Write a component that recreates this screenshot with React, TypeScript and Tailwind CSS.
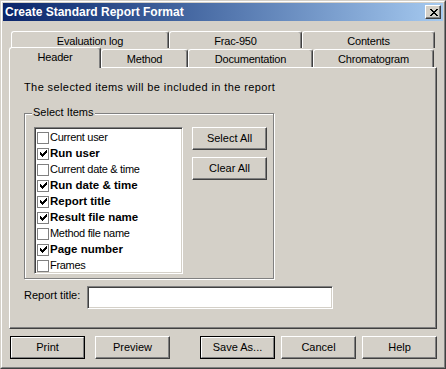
import React from "react";

const items: [string, boolean][] = [
  ["Current user", false],
  ["Run user", true],
  ["Current date & time", false],
  ["Run date & time", true],
  ["Report title", true],
  ["Result file name", true],
  ["Method file name", false],
  ["Page number", true],
  ["Frames", false],
];

const checkPx = [
  [6, 0], [5, 1], [6, 1], [0, 2], [4, 2], [5, 2], [6, 2], [0, 3], [1, 3], [3, 3], [4, 3], [5, 3],
  [0, 4], [1, 4], [2, 4], [3, 4], [4, 4], [1, 5], [2, 5], [3, 5], [2, 6],
];

const xPx = [
  [0, 0], [1, 0], [6, 0], [7, 0],
  [1, 1], [2, 1], [5, 1], [6, 1],
  [2, 2], [3, 2], [4, 2], [5, 2],
  [3, 3], [4, 3],
  [2, 4], [3, 4], [4, 4], [5, 4],
  [1, 5], [2, 5], [5, 5], [6, 5],
  [0, 6], [1, 6], [6, 6], [7, 6],
];

function PixelGlyph({ px, w, h }: { px: number[][]; w: number; h: number }) {
  return (
    <svg width={w} height={h} viewBox={`0 0 ${w} ${h}`} shapeRendering="crispEdges">
      {px.map(([x, y], i) => (
        <rect key={i} x={x} y={y} width="1" height="1" fill="#000" />
      ))}
    </svg>
  );
}

function Btn({ label, def }: { label: string; def?: boolean }) {
  if (def) {
    return (
      <div className="w-[75px] h-[23px] border border-black bg-[#d4d0c8]">
        <div className="w-full h-full border border-t-white border-l-white border-r-[#808080] border-b-[#808080] flex items-center justify-center text-[11px] text-black">
          {label}
        </div>
      </div>
    );
  }
  return (
    <div className="w-[75px] h-[23px] border border-t-white border-l-white border-r-[#404040] border-b-[#404040] shadow-[inset_-1px_-1px_0_#808080] bg-[#d4d0c8] flex items-center justify-center text-[11px] text-black">
      {label}
    </div>
  );
}

function BackTab({ label, w }: { label: string; w: number }) {
  return (
    <div
      style={{ width: w }}
      className="h-[17px] border-l border-t border-r border-l-white border-t-white border-r-[#404040] shadow-[inset_-1px_0_0_#808080] rounded-t-[3px] bg-[#d4d0c8] flex items-center justify-center pt-[2px] text-[11px] tracking-[-0.2px] text-black"
    >
      {label}
    </div>
  );
}

function FrontTab({ label, w }: { label: string; w: number }) {
  return (
    <div
      style={{ width: w }}
      className="mt-[1px] h-[18px] border-l border-t border-r border-l-white border-t-white border-r-[#404040] shadow-[inset_-1px_0_0_#808080] rounded-t-[3px] bg-[#d4d0c8] flex items-center justify-center pt-[1px] text-[11px] tracking-[-0.2px] text-black"
    >
      {label}
    </div>
  );
}

export default function App() {
  return (
    <div className="w-[446px] h-[369px] bg-[#d4d0c8] border border-t-[#d4d0c8] border-l-[#d4d0c8] border-r-[#404040] border-b-[#404040] font-['Liberation_Sans',Arial,sans-serif]">
      <div className="w-full h-full border border-t-white border-l-white border-r-[#808080] border-b-[#808080] p-[1px] flex flex-col">
        {/* Title bar */}
        <div className="h-[18px] bg-gradient-to-r from-[#0a246a] to-[#a6caf0] flex items-center justify-between pl-[2px] pr-[2px]">
          <span className="text-white font-bold text-[12px] leading-[14px]">Create Standard Report Format</span>
          <div className="w-[16px] h-[14px] border border-t-white border-l-white border-r-[#404040] border-b-[#404040] shadow-[inset_-1px_-1px_0_#808080] bg-[#d4d0c8] flex items-center justify-center pl-[1px]">
            <PixelGlyph px={xPx} w={8} h={7} />
          </div>
        </div>

        {/* Tabs back row */}
        <div className="mt-[10px] ml-[8px] flex">
          <BackTab label="Evaluation log" w={158} />
          <BackTab label="Frac-950" w={133} />
          <BackTab label="Contents" w={133} />
        </div>
        {/* Tabs front row */}
        <div className="ml-[6px] flex h-[19px] items-start">
          <div className="relative z-10 -mt-px w-[92px] h-[21px] border-l border-t border-r border-l-white border-t-white border-r-[#404040] shadow-[inset_-1px_0_0_#808080] rounded-t-[3px] bg-[#d4d0c8] flex items-start justify-center pt-[1px] text-[11px] tracking-[-0.2px] text-black">
            Header
          </div>
          <FrontTab label="Method" w={87} />
          <FrontTab label="Documentation" w={125} />
          <FrontTab label="Chromatogram" w={121} />
        </div>

        {/* Panel */}
        <div className="ml-[6px] w-[428px] h-[262px] border border-t-white border-l-white border-r-[#404040] border-b-[#404040] shadow-[inset_-1px_-1px_0_#808080] flex flex-col pl-[14px]">
          <div className="mt-[13px] h-[13px] leading-[13px] text-[11px] tracking-[0.4px] text-black">
            The selected items will be included in the report
          </div>

          {/* Group box */}
          <div className="relative mt-[19px] w-[250px] h-[166px] border border-[#808080] shadow-[1px_1px_0_white,inset_1px_1px_0_white]">
            <span className="absolute left-[7px] top-[-8px] px-[1px] bg-[#d4d0c8] text-[11px] leading-[13px] text-black">
              Select Items
            </span>
            <div className="flex pl-[9px] pt-[13px] gap-[9px]">
              <div className="w-[149px] h-[147px] bg-white border border-t-[#808080] border-l-[#808080] border-r-white border-b-white shadow-[inset_1px_1px_0_#404040,inset_-1px_-1px_0_#d4d0c8] pt-[1px] pl-[1px]">
                {items.map(([label, checked]) => (
                  <div key={label} className="h-[16px] flex items-center">
                    <div className="ml-[1px] w-[12px] h-[12px] border border-[#808080] bg-white flex items-center justify-center mt-[1px]">
                      {checked ? <PixelGlyph px={checkPx} w={7} h={7} /> : null}
                    </div>
                    {checked ? (
                      <span className="ml-[1px] text-[11.5px] font-bold text-black leading-[14px]">{label}</span>
                    ) : (
                      <span className="ml-[1px] text-[11px] tracking-[-0.3px] text-black leading-[14px]">{label}</span>
                    )}
                  </div>
                ))}
              </div>
              <div className="flex flex-col gap-[7px]">
                <Btn label="Select All" />
                <Btn label="Clear All" />
              </div>
            </div>
          </div>

          {/* Report title */}
          <div className="mt-[7px] flex items-start">
            <span className="w-[63px] mt-[3px] text-[11px] leading-[13px] text-black">Report title:</span>
            <div className="w-[246px] h-[23px] bg-white border border-t-[#808080] border-l-[#808080] border-r-white border-b-white shadow-[inset_1px_1px_0_#404040,inset_-1px_-1px_0_#d4d0c8]" />
          </div>
        </div>

        {/* Bottom buttons */}
        <div className="mt-[7px] ml-[7px] flex">
          <Btn label="Print" def />
          <div className="ml-[10px]">
            <Btn label="Preview" />
          </div>
          <div className="ml-[30px]">
            <Btn label="Save As..." def />
          </div>
          <div className="ml-[6px]">
            <Btn label="Cancel" />
          </div>
          <div className="ml-[6px]">
            <Btn label="Help" />
          </div>
        </div>
      </div>
    </div>
  );
}
